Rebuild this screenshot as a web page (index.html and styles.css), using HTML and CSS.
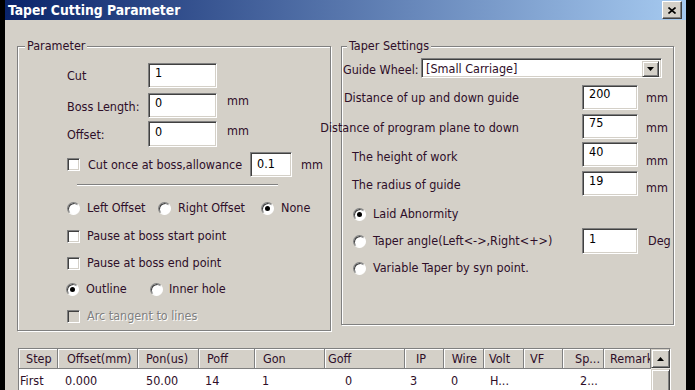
FILE: index.html
```html
<!DOCTYPE html>
<html>
<head>
<meta charset="utf-8">
<title>Taper Cutting Parameter</title>
<link rel="stylesheet" href="styles.css">
</head>
<body>
<div class="window">
  <div class="titlebar">
    <span class="title">Taper Cutting Parameter</span>
    <span class="close"><svg width="8" height="7" viewBox="0 0 8 7"><path d="M0.5 0.5 L7.5 6.5 M7.5 0.5 L0.5 6.5" stroke="#000" stroke-width="1.6" fill="none"/></svg></span>
  </div>
  <div class="client">
    <div class="groups">
      <div class="group g-left">
        <span class="legend lg-left">Parameter</span>
        <div class="row r1"><span class="lbl pt6">Cut</span><span class="edit w69">1</span></div>
        <div class="row r2"><span class="lbl pt7">Boss Length:</span><span class="edit w69">0</span><span class="unit pt1">mm</span></div>
        <div class="row r3"><span class="lbl pt7">Offset:</span><span class="edit w69 h26 ept3">0</span><span class="unit pt3">mm</span></div>
        <div class="row r4">
          <span class="check"></span><span class="cblbl">Cut once at boss,allowance</span><span class="edit w42 ept4">0.1</span><span class="unit2">mm</span>
        </div>
        <div class="sep"></div>
        <div class="opt r5">
          <span class="ritem wi1"><span class="radio"></span><span class="rtext">Left Offset</span></span>
          <span class="ritem wi2"><span class="radio"></span><span class="rtext">Right Offset</span></span>
          <span class="ritem"><span class="radio on"></span><span class="rtext">None</span></span>
        </div>
        <div class="opt r6"><span class="check"></span><span class="ctext">Pause at boss start point</span></div>
        <div class="opt r7"><span class="check"></span><span class="ctext">Pause at boss end point</span></div>
        <div class="opt r8">
          <span class="ritem wi3"><span class="radio on"></span><span class="rtext">Outline</span></span>
          <span class="ritem"><span class="radio"></span><span class="rtext g6">Inner hole</span></span>
        </div>
        <div class="opt r9"><span class="check dis"></span><span class="ctext distext">Arc tangent to lines</span></div>
      </div>
      <div class="group g-right">
        <span class="legend lg-right">Taper Settings</span>
        <div class="row q0">
          <span class="glbl">Guide Wheel:</span>
          <span class="combo"><span class="ctxt">[Small Carriage]</span><span class="dbtn"><svg width="7" height="4" viewBox="0 0 7 4"><path d="M0 0 H7 L3.5 4 Z" fill="#000"/></svg></span></span>
        </div>
        <div class="row q1"><span class="rlbl pt6">Distance of up and down guide</span><span class="edit w56 ept1 rin">200</span><span class="unit3 pt6">mm</span></div>
        <div class="row q2"><span class="rlbl pt7">Distance of program plane to down</span><span class="edit w56 ept1 rin">75</span><span class="unit3 pt7">mm</span></div>
        <div class="row q3"><span class="rlbl2 pt8">The height of work</span><span class="edit w56 rin">40</span><span class="unit3 pt12">mm</span></div>
        <div class="row q4"><span class="rlbl2 pt7">The radius of guide</span><span class="edit w56 rin">19</span><span class="unit3 pt10">mm</span></div>
        <div class="opt q5"><span class="radio on"></span><span class="rtext">Laid Abnormity</span></div>
        <div class="row q6">
          <span class="taper"><span class="radio"></span><span class="rtext">Taper angle(Left&lt;-&gt;,Right&lt;+&gt;)</span></span>
          <span class="edit w56 h26 ept3">1</span><span class="unit4">Deg</span>
        </div>
        <div class="opt q7"><span class="radio"></span><span class="rtext">Variable Taper by syn point.</span></div>
      </div>
    </div>
    <div class="table">
      <div class="list">
        <div class="grid head">
          <span class="hc p7">Step</span>
          <span class="hc p9">Offset(mm)</span>
          <span class="hc p8">Pon(us)</span>
          <span class="hc p8">Poff</span>
          <span class="hc p8">Gon</span>
          <span class="hc p3">Goff</span>
          <span class="hc p11">IP</span>
          <span class="hc right">Wire</span>
          <span class="hc p5">Volt</span>
          <span class="hc p6">VF</span>
          <span class="hc p12">Sp...</span>
          <span class="hc p6 clip">Remark</span>
        </div>
        <div class="grid data">
          <span class="dc p1">First</span>
          <span class="dc p7">0.000</span>
          <span class="dc p8">50.00</span>
          <span class="dc p6">14</span>
          <span class="dc p7">1</span>
          <span class="dc p20">0</span>
          <span class="dc p5">3</span>
          <span class="dc p7">0</span>
          <span class="dc p6">H...</span>
          <span class="dc"></span>
          <span class="dc p17">2...</span>
          <span class="dc"></span>
        </div>
      </div>
      <div class="vscroll">
        <span class="sbtn"><svg width="7" height="4" viewBox="0 0 7 4"><path d="M0 4 H7 L3.5 0 Z" fill="#000"/></svg></span>
        <span class="thumb"></span>
      </div>
    </div>
  </div>
</div>
</body>
</html>
```
FILE: styles.css
```css
* { box-sizing: border-box; }
html, body { margin: 0; padding: 0; }
body {
  background: #000;
  width: 695px;
  height: 390px;
  overflow: hidden;
  font-family: "DejaVu Sans Condensed", "DejaVu Sans", sans-serif;
  font-stretch: condensed;
  font-size: 12.5px;
  line-height: 14px;
  color: #2e0e28;
}
.window {
  margin-left: 5px;
  width: 681px;
  height: 390px;
  background: #d4d0c8;
  display: flex;
  flex-direction: column;
}
.titlebar {
  height: 20px;
  flex: none;
  background: linear-gradient(to right, #0a246a, #a6caf0);
  display: flex;
  align-items: center;
  padding: 0 4px 0 3px;
}
.title {
  flex: 1;
  color: #fff;
  font-weight: bold;
  font-size: 13.8px;
  white-space: nowrap;
}
.close {
  width: 20px;
  height: 18px;
  background: #d4d0c8;
  border: 1px solid;
  border-color: #fff #404040 #404040 #fff;
  box-shadow: inset -1px -1px 0 #808080;
  display: flex;
  align-items: center;
  justify-content: center;
}
.client { flex: 1; display: flex; flex-direction: column; }
.groups {
  display: flex;
  align-items: flex-start;
  gap: 10px;
  padding: 26px 0 0 12px;
}
.group {
  position: relative;
  border: 1px solid #808080;
  box-shadow: inset 1px 1px 0 #fff, 1px 1px 0 #fff;
  display: flex;
  flex-direction: column;
}
.g-left { width: 314px; height: 285px; padding: 16px 0 0 49px; }
.g-right { width: 333px; height: 279px; padding: 11px 0 0 1px; }
.legend {
  position: absolute;
  top: -8px;
  padding: 0 2px;
  background: #d4d0c8;
  white-space: nowrap;
}
.lg-left { left: 7px; }
.lg-right { left: 5px; }
.row { display: flex; align-items: flex-start; flex: none; white-space: nowrap; }
.lbl { width: 81px; }
.pt1 { padding-top: 1px; }
.pt3 { padding-top: 3px; }
.pt6 { padding-top: 6px; }
.pt7 { padding-top: 7px; }
.pt8 { padding-top: 8px; }
.pt10 { padding-top: 10px; }
.pt12 { padding-top: 12px; }
.edit {
  display: block;
  height: 25px;
  background: #fff;
  color: #000;
  border: 1px solid;
  border-color: #808080 #fff #fff #808080;
  box-shadow: inset 1px 1px 0 #404040, inset -1px -1px 0 #d4d0c8;
  padding: 2px 0 0 6px;
}
.ept1 { padding-top: 1px; }
.ept3 { padding-top: 3px; }
.ept4 { padding-top: 4px; }
.w69 { width: 69px; }
.w42 { width: 42px; }
.w56 { width: 56px; }
.h26 { height: 26px; }
.unit { margin-left: 10px; }
.r1 { height: 25px; }
.r2 { margin-top: 5px; height: 25px; }
.r3 { margin-top: 3px; height: 26px; }
.r4 { margin-top: 5px; height: 25px; align-items: center; }
.cblbl { width: 170px; padding-left: 8px; }
.unit2 { margin-left: 9px; }
.sep {
  margin: 7px 0 0 10px;
  width: 201px;
  height: 2px;
  border-top: 1px solid #808080;
  border-bottom: 1px solid #fff;
  flex: none;
}
.opt { display: flex; align-items: center; height: 16px; flex: none; white-space: nowrap; }
.r5 { margin-top: 14px; }
.r6 { margin-top: 12px; }
.r7 { margin-top: 11px; }
.r8 { margin-top: 10px; margin-left: -1px; }
.r9 { margin-top: 11px; }
.ritem { display: flex; align-items: center; }
.wi1 { width: 91px; }
.wi2 { width: 103px; }
.wi3 { width: 84px; }
.rtext { margin-left: 7px; }
.g6 { margin-left: 6px; }
.ctext { margin-left: 7px; }
.distext { color: #808080; text-shadow: 1px 1px 0 #fff; }
.check {
  display: block;
  width: 13px;
  height: 13px;
  flex: none;
  background: #fff;
  border: 1px solid;
  border-color: #808080 #fff #fff #808080;
  box-shadow: inset 1px 1px 0 #404040, inset -1px -1px 0 #d4d0c8;
}
.check.dis { background: #d4d0c8; }
.radio {
  display: block;
  position: relative;
  width: 13px;
  height: 13px;
  flex: none;
  border-radius: 50%;
  background: #fff;
  border: 1px solid;
  border-color: #808080 #fff #fff #808080;
  box-shadow: inset 1px 1px 0 #404040;
}
.radio.on::after {
  content: "";
  position: absolute;
  left: 3px;
  top: 3px;
  width: 5px;
  height: 5px;
  border-radius: 50%;
  background: #000;
}
.q0 { height: 20px; }
.glbl { width: 78px; padding-top: 5px; }
.combo {
  display: flex;
  justify-content: space-between;
  width: 241px;
  height: 20px;
  background: #fff;
  color: #2e0e28;
  border: 1px solid;
  border-color: #808080 #fff #fff #808080;
  box-shadow: inset 1px 1px 0 #404040, inset -1px -1px 0 #d4d0c8;
  padding: 2px 2px 2px 4px;
}
.ctxt { padding-top: 1px; }
.dbtn {
  width: 17px;
  height: 16px;
  background: #d4d0c8;
  border: 1px solid;
  border-color: #d4d0c8 #404040 #404040 #d4d0c8;
  box-shadow: inset 1px 1px 0 #fff, inset -1px -1px 0 #808080;
  display: flex;
  align-items: center;
  justify-content: center;
}
.q1 { margin-top: 7px; height: 25px; }
.q2 { margin-top: 4px; height: 25px; }
.q3 { margin-top: 3px; height: 25px; }
.q4 { margin-top: 4px; height: 25px; }
.rlbl { width: 176px; display: flex; justify-content: flex-end; }
.rlbl2 { width: 176px; padding-left: 9px; }
.rin { margin-left: 63px; }
.unit3 { margin-left: 8px; }
.q5 { margin-top: 10px; padding-left: 10px; }
.q6 { margin-top: 6px; height: 26px; align-items: center; }
.taper { width: 239px; padding-left: 10px; display: flex; align-items: center; }
.unit4 { margin-left: 10px; }
.q7 { margin-top: 6px; padding-left: 10px; }
.table {
  margin: 17px 0 0 13px;
  width: 653px;
  flex: none;
  height: 60px;
  display: flex;
  border: 1px solid;
  border-color: #808080 #fff #fff #808080;
  background: #fff;
}
.list { width: 632px; }
.grid {
  display: grid;
  grid-template-columns: 39px 80px 61px 56px 70px 80px 39px 40px 40px 39px 41px 47px;
}
.head { height: 20px; background: #d4d0c8; }
.hc {
  display: block;
  overflow: hidden;
  white-space: nowrap;
  color: #2e0e28;
  padding-top: 3px;
  border-right: 1px solid #808080;
  border-bottom: 1px solid #808080;
  box-shadow: inset 1px 1px 0 #fff;
}
.hc.right { text-align: right; padding-right: 6px; }
.data { height: 22px; }
.dc { display: block; white-space: nowrap; padding-top: 5px; }
.p1 { padding-left: 1px; }
.p3 { padding-left: 3px; }
.p5 { padding-left: 5px; }
.p6 { padding-left: 6px; }
.p7 { padding-left: 7px; }
.p8 { padding-left: 8px; }
.p9 { padding-left: 9px; }
.p11 { padding-left: 11px; }
.p12 { padding-left: 12px; }
.p17 { padding-left: 17px; }
.p20 { padding-left: 20px; }
.clip { text-overflow: clip; }
.vscroll {
  width: 19px;
  background: #ece9e4;
  display: flex;
  flex-direction: column;
}
.sbtn, .thumb {
  display: flex;
  align-items: center;
  justify-content: center;
  background: #d4d0c8;
  border: 1px solid;
  border-color: #d4d0c8 #404040 #404040 #d4d0c8;
  box-shadow: inset 1px 1px 0 #fff, inset -1px -1px 0 #808080;
}
.sbtn { height: 20px; }
.thumb { margin-top: 1px; height: 40px; }
```
